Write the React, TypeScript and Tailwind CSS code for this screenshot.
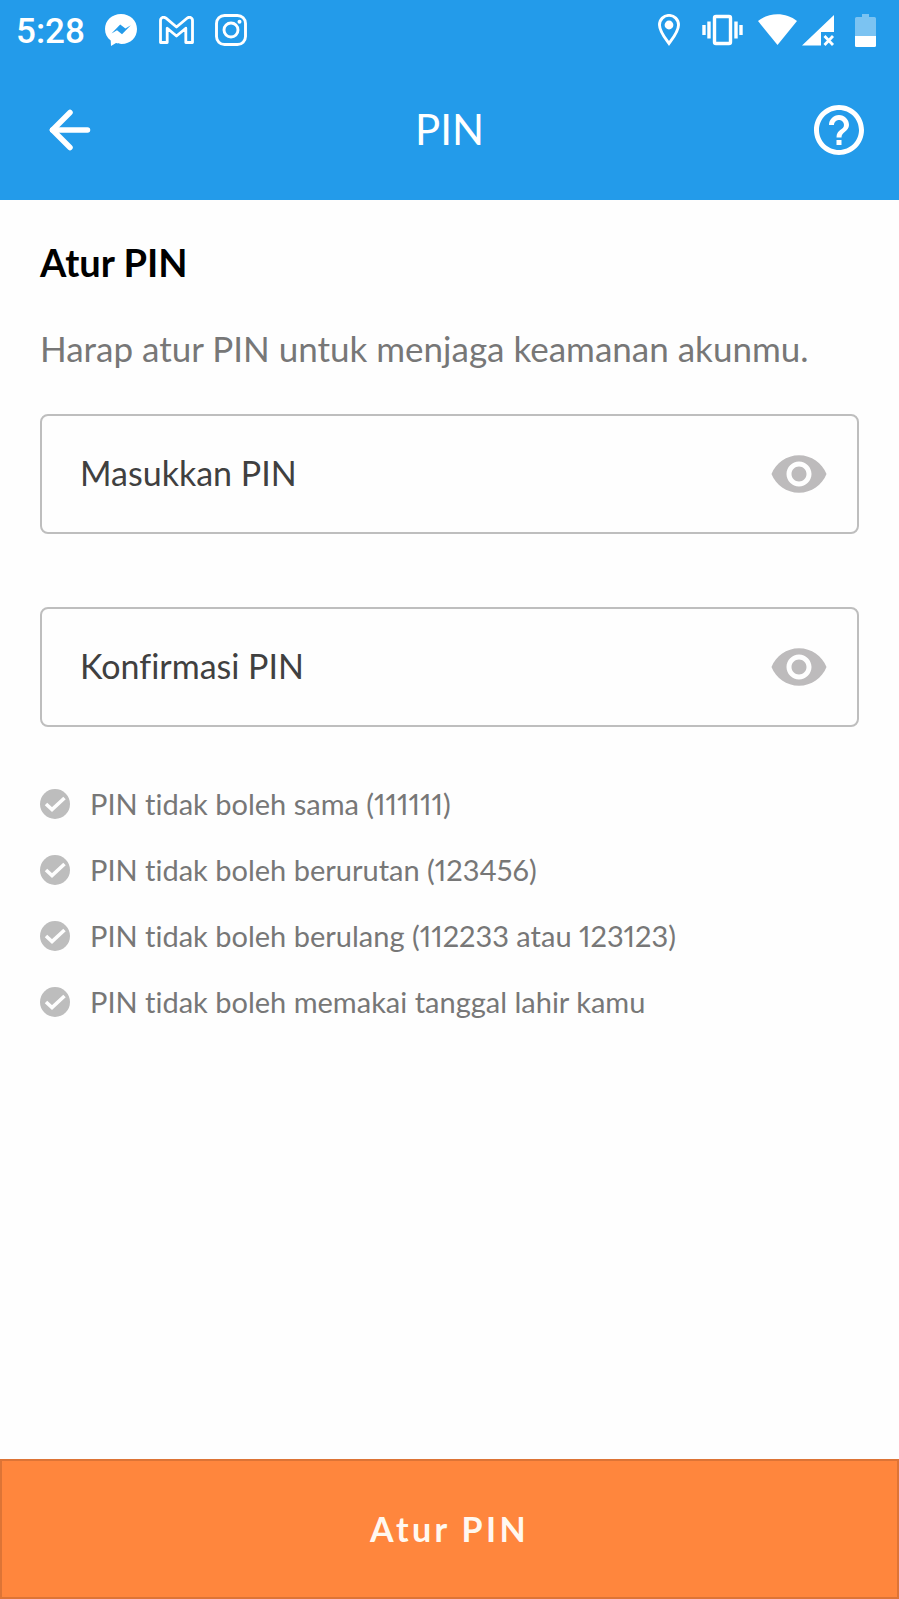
import { useState } from "react"
import { ArrowLeft } from "lucide-react"
import { MdHelpOutline, MdVisibility } from "react-icons/md"

const rules = [
    "PIN tidak boleh sama (111111)",
    "PIN tidak boleh berurutan (123456)",
    "PIN tidak boleh berulang (112233 atau 123123)",
    "PIN tidak boleh memakai tanggal lahir kamu",
]

const StatusBar = () => {
    return (
        <div className="flex h-15 items-center justify-between pl-4 pr-[23px] text-white">
            <div className="flex items-center">
                <span className="w-[89px] pt-1 font-['Roboto',sans-serif] text-[35px] leading-10 font-medium">5:28</span>
                {/* messenger */}
                <svg className="w-8 h-8 mr-[22px]" viewBox="0 0 32 32" fill="currentColor">
                    <path fillRule="evenodd" d="M16 0C25 0 32 6.600 32 15C32 23.500 25.500 30 16.500 30C14.600 30 12.500 29.600 11 29.100L6 32L5.700 26.500C2 23.600 0 19.800 0 15C0 6.600 7 0 16 0ZM6.500 19.500L12 16.200L17 20.200L25.800 11.200L20.400 14.500L15.200 10.600Z" />
                </svg>
                {/* gmail */}
                <svg className="w-[35px] h-7 mr-[21px]" viewBox="0 0 35 28" fill="none" stroke="currentColor" strokeWidth="2.800" strokeLinejoin="round">
                    <path d="M1.500 4.500C1.500 1.400 4.700 0.300 7 2.200L17.500 11L28 2.200C30.300 0.300 33.500 1.400 33.500 4.500V26.500H26.800V12.200L17.500 20L8.200 12.200V26.500H1.500Z" />
                </svg>
                {/* instagram */}
                <svg className="w-8 h-8" viewBox="0 0 32 32" fill="none" stroke="currentColor" strokeWidth="2.900">
                    <rect x="1.500" y="1.500" width="29" height="29" rx="8" />
                    <circle cx="16" cy="16" r="7" />
                    <circle cx="24.500" cy="7.800" r="2" fill="currentColor" stroke="none" />
                </svg>
            </div>
            <div className="flex items-center">
                {/* location */}
                <svg className="w-[22px] h-8 mr-[22px]" viewBox="0 0 22 32" fill="none" stroke="currentColor" strokeWidth="2.900">
                    <path d="M11 29.500C7 24 1.500 17.500 1.500 11C1.500 5.500 5.700 1.400 11 1.400S20.500 5.500 20.500 11C20.500 17.500 15 24 11 29.500Z" />
                    <circle cx="11" cy="11" r="4.400" fill="currentColor" stroke="none" />
                </svg>
                {/* vibrate */}
                <svg className="w-[41px] h-8 mr-[15px]" viewBox="0 0 41 32" fill="none" stroke="currentColor" strokeWidth="3.400">
                    <rect x="12.500" y="2.500" width="16" height="27" rx="1.500" />
                    <path d="M2 11V21M7 7.500V24.500M34 7.500V24.500M39 11V21" />
                </svg>
                {/* wifi */}
                <svg className="w-[39px] h-8 mr-[5px]" viewBox="0 0 39 32" fill="currentColor">
                    <path d="M0 7C11 -2 28 -2 39 7L19.500 31Z" />
                </svg>
                {/* mobile signal, no data */}
                <svg className="w-[33px] h-8 mr-[20px]" viewBox="0 0 33 32" fill="currentColor">
                    <path d="M32 1V18H19V31.500H0Z" />
                    <path d="M22.500 22L31 31M31 22L22.500 31" stroke="currentColor" strokeWidth="2.800" />
                </svg>
                {/* battery */}
                <svg className="w-[21px] h-[33px]" viewBox="0 0 21 33" fill="currentColor">
                    <path opacity="0.400" d="M7 0H14V3H19.500Q21 3 21 4.500V22H0V4.500Q0 3 1.500 3H7Z" />
                    <path d="M0 22H21V31.500Q21 33 19.500 33H1.500Q0 33 0 31.500Z" />
                </svg>
            </div>
        </div>
    )
}

const PinInput = ({ id, label }: { id: string; label: string }) => {

    const [value, setValue] = useState("")
    const [visible, setVisible] = useState(false)

    return (
        <div className="flex h-30 items-center rounded-lg border-2 border-[#bebebe] pl-[38px] pr-7 text-[34px] leading-12 text-[#404040]">
            {/* label sits in the same cell as the input and fades once there is a value */}
            <div className="grid min-w-0 flex-1 items-center">
                <label htmlFor={id} className={value ? "col-start-1 row-start-1 opacity-0" : "col-start-1 row-start-1 pb-0.5"}>
                    {label}
                </label>
                <input
                    id={id}
                    type={visible ? "text" : "password"}
                    inputMode="numeric"
                    maxLength={6}
                    value={value}
                    onChange={(e) => setValue(e.target.value)}
                    className="col-start-1 row-start-1 w-full bg-transparent outline-none"
                />
            </div>
            <button type="button" aria-label={`Lihat ${label}`} onClick={() => setVisible(!visible)}>
                <MdVisibility className="w-[60px] h-[60px] text-[#bdbbbc]" />
            </button>
        </div>
    )
}

const App = () => {
    return (
        <div className="flex min-h-screen flex-col bg-[#fefefe] font-['Lato',sans-serif] [font-variant-ligatures:none]">
            <header className="bg-[#239bea] text-white">
                <StatusBar />
                <div className="grid h-35 grid-cols-3 items-center px-[30px]">
                    <button type="button" aria-label="Kembali" className="justify-self-start pl-2.5">
                        <ArrowLeft className="w-15 h-15" strokeWidth={2.2} />
                    </button>
                    <h1 className="pb-0.5 text-center text-[42px] leading-12">PIN</h1>
                    <button type="button" aria-label="Bantuan" className="justify-self-end">
                        <MdHelpOutline className="w-15 h-15" />
                    </button>
                </div>
            </header>

            <form className="flex flex-1 flex-col" onSubmit={(e) => e.preventDefault()}>
                <div className="px-10 pt-[38px] pb-10">
                    <h2 className="text-[38px] leading-12 font-bold text-black">Atur PIN</h2>
                    <p className="mt-[38px] text-[35px] leading-12 text-[#777777]">
                        Harap atur PIN untuk menjaga keamanan akunmu.
                    </p>
                    <div className="mt-[42px] flex flex-col gap-[73px]">
                        <PinInput id="pin" label="Masukkan PIN" />
                        <PinInput id="pin-confirm" label="Konfirmasi PIN" />
                    </div>
                    <ul className="mt-[57px] flex flex-col gap-[26px]">
                        {rules.map((rule) => (
                            <li key={rule} className="flex items-center gap-5 text-[29px] leading-10 text-[#777777] proportional-nums">
                                <svg className="w-[30px] h-[30px] shrink-0" viewBox="0 0 30 30" fill="none">
                                    <circle cx="15" cy="15" r="15" fill="#bdbdbd" />
                                    <path d="M6 15L12 20.500L24.500 9" stroke="#fefefe" strokeWidth="3.600" />
                                </svg>
                                {rule}
                            </li>
                        ))}
                    </ul>
                </div>
                <button
                    type="submit"
                    className="mt-auto h-35 w-full border-2 border-[#dd7436] bg-[#ff863d] text-[34px] leading-10 font-bold tracking-widest text-[#fff8f0]"
                >
                    Atur PIN
                </button>
            </form>
        </div>
    )
}

export default App
